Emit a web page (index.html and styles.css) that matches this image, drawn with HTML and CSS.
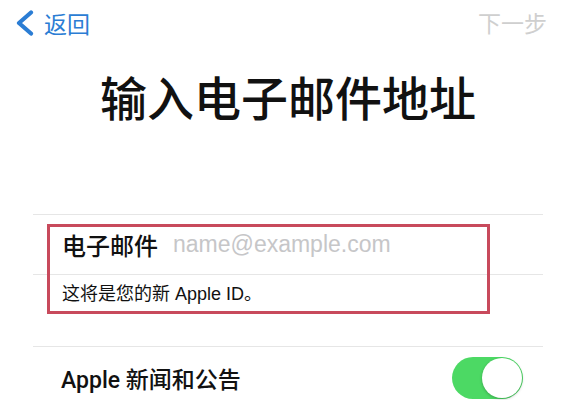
FILE: index.html
```html
<!DOCTYPE html>
<html lang="zh-CN">
<head>
<meta charset="utf-8">
<title>输入电子邮件地址</title>
<link rel="stylesheet" href="styles.css">
</head>
<body>
<div class="screen">
  <header class="nav">
    <a class="back">
      <svg class="chev" width="22" height="26" viewBox="0 0 22 26"><path d="M16 2.5 L4 13 L16 23.5" fill="none" stroke="#2b7dd4" stroke-width="4.2" stroke-linecap="round" stroke-linejoin="round"/></svg>
      <span>返回</span>
    </a>
    <span class="next">下一步</span>
  </header>
  <h1 class="title">输入电子邮件地址</h1>
  <section class="group">
    <div class="row email">
      <span class="label">电子邮件</span>
      <span class="placeholder">name@example.com</span>
    </div>
    <div class="note">这将是您的新 Apple ID。</div>
    <div class="annot"></div>
  </section>
  <section class="group2">
    <div class="row toggle-row">
      <span class="label2">Apple 新闻和公告</span>
      <span class="switch"><span class="knob"></span></span>
    </div>
  </section>
</div>
</body>
</html>
```
FILE: styles.css
```css
html, body {
  margin: 0;
  padding: 0;
  background: #ffffff;
}
body {
  font-family: "Liberation Sans", "Noto Sans CJK SC", sans-serif;
  color: #111111;
  overflow: hidden;
}
.screen {
  width: 576px;
  height: 400px;
  overflow: hidden;
}
.nav {
  height: 46px;
  display: flex;
  align-items: center;
  justify-content: space-between;
  padding: 0 29px 0 15px;
}
.back {
  display: flex;
  align-items: center;
  gap: 7px;
  color: #2b7dd4;
  font-size: 23px;
  font-family: "Noto Sans CJK SC", sans-serif;
  margin-top: -1px;
}
.chev {
  display: block;
}
.next {
  color: #cfcfcf;
  font-size: 23px;
  font-family: "Noto Sans CJK SC", sans-serif;
  margin-top: -2px;
}
.title {
  margin: 24px 0 0 0;
  text-align: center;
  font-family: "Noto Sans CJK SC", sans-serif;
  font-weight: 500;
  font-size: 47px;
  line-height: 51px;
  color: #111111;
}
.group {
  position: relative;
  margin: 93px 33px 0 33px;
  border-top: 1px solid #e6e6e6;
}
.row {
  display: flex;
  align-items: center;
}
.email {
  height: 59px;
  padding-left: 29px;
  gap: 15px;
  border-bottom: 1px solid #e6e6e6;
}
.label {
  font-family: "Noto Sans CJK SC", sans-serif;
  font-weight: 500;
  font-size: 24px;
  color: #111111;
}
.placeholder {
  font-family: "Liberation Sans", sans-serif;
  font-size: 23px;
  color: #c6c6c8;
}
.note {
  height: 71px;
  padding: 6px 0 0 29px;
  box-sizing: border-box;
  font-size: 18px;
  line-height: 26px;
  color: #111111;
}
.annot {
  position: absolute;
  left: 14px;
  top: 9px;
  width: 437px;
  height: 84px;
  border: 3px solid #c84a5c;
  box-sizing: content-box;
  pointer-events: none;
}
.group2 {
  margin: 0 33px;
  border-top: 1px solid #e6e6e6;
}
.toggle-row {
  height: 60px;
  padding: 0 20px 0 28px;
  justify-content: space-between;
}
.label2 {
  font-family: "Roboto", "Noto Sans CJK SC", sans-serif;
  font-weight: 500;
  font-size: 23px;
  color: #111111;
  margin-top: 1px;
}
.switch {
  width: 71px;
  height: 42px;
  border-radius: 21px;
  background: #4cd964;
  display: flex;
  align-items: center;
  justify-content: flex-end;
  padding: 1px;
  box-sizing: border-box;
  margin-top: 1px;
}
.knob {
  width: 40px;
  height: 40px;
  border-radius: 50%;
  background: #ffffff;
  box-shadow: 0 1px 3px rgba(0,0,0,0.25);
}
```
